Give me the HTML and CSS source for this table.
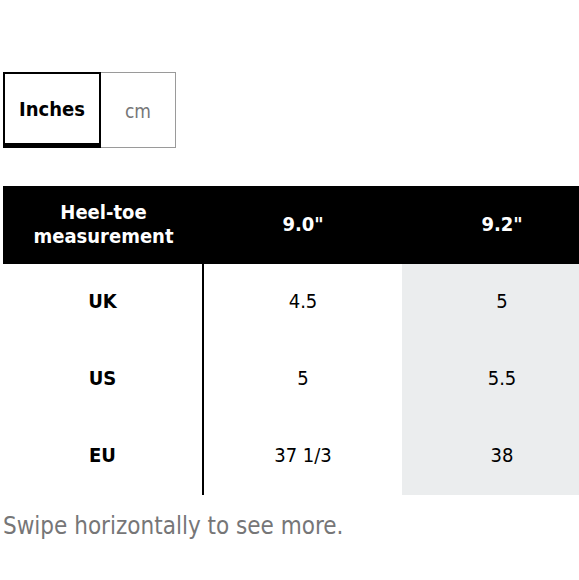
FILE: index.html
```html
<!DOCTYPE html>
<html>
<head>
<meta charset="utf-8">
<link rel="stylesheet" href="styles.css">
</head>
<body>
<div class="page">
  <div class="toggle">
    <div class="opt opt-active">Inches</div>
    <div class="opt opt-idle">cm</div>
  </div>
  <div class="scroller">
    <div class="table">
      <div class="row head">
        <div class="cell c1">Heel-toe<br>measurement</div>
        <div class="cell c2">9.0"</div>
        <div class="cell c3">9.2"</div>
      </div>
      <div class="row">
        <div class="cell c1 label">UK</div>
        <div class="cell c2">4.5</div>
        <div class="cell c3 shade">5</div>
      </div>
      <div class="row">
        <div class="cell c1 label">US</div>
        <div class="cell c2">5</div>
        <div class="cell c3 shade">5.5</div>
      </div>
      <div class="row">
        <div class="cell c1 label">EU</div>
        <div class="cell c2">37 1/3</div>
        <div class="cell c3 shade">38</div>
      </div>
    </div>
  </div>
  <p class="hint">Swipe horizontally to see more.</p>
</div>
</body>
</html>
```
FILE: styles.css
```css
html, body {
  margin: 0;
  padding: 0;
  background: #fff;
}
body {
  font-family: "DejaVu Sans Condensed", "DejaVu Sans", sans-serif;
  color: #000;
}
.page {
  padding: 72px 0 0 3px;
}
.toggle {
  display: flex;
}
.opt {
  box-sizing: border-box;
  height: 76px;
  display: flex;
  align-items: center;
  justify-content: center;
  font-size: 20px;
}
.opt-active {
  width: 98px;
  border: 2px solid #000;
  border-bottom-width: 5px;
  font-weight: bold;
}
.opt-idle {
  width: 75px;
  border: 1.5px solid #9a9a9a;
  border-left: none;
  color: #767677;
  font-size: 19px;
  padding-top: 2px;
}
.scroller {
  margin-top: 38px;
  overflow: hidden;
}
.table {
  width: 599px;
}
.row {
  display: flex;
  height: 77px;
}
.row.head {
  height: 78px;
  background: #000;
  color: #fff;
  font-weight: bold;
  line-height: 24px;
}
.cell {
  box-sizing: border-box;
  display: flex;
  align-items: center;
  justify-content: center;
  text-align: center;
  font-size: 20px;
  padding-bottom: 4px;
}
.head .cell {
  padding-bottom: 2px;
}
.c1 {
  width: 201px;
}
.row:not(.head) .c1 {
  border-right: 2px solid #000;
}
.c2 {
  width: 198px;
}
.c3 {
  width: 200px;
}
.label {
  font-weight: bold;
}
.shade {
  background: #ebedee;
}
.hint {
  margin: 17px 0 0;
  font-size: 24px;
  color: #767677;
}
```
